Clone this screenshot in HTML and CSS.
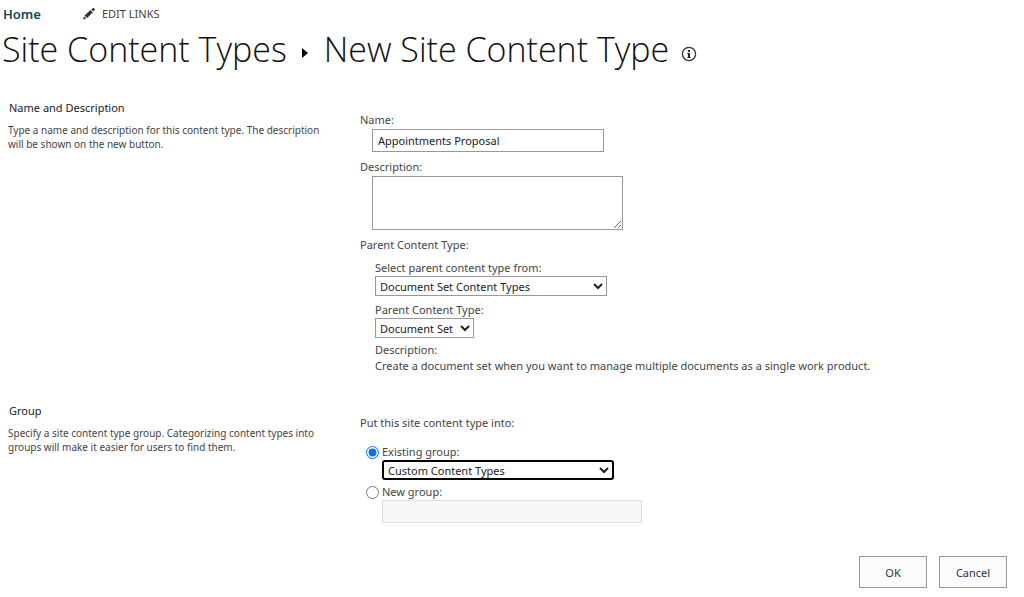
FILE: index.html
```html
<!DOCTYPE html>
<html lang="en">
  <head>
    <meta charset="UTF-8" />
    <meta name="viewport" content="width=device-width, initial-scale=1.0" />
    <title>New Site Content Type</title>
    <link rel="stylesheet" href="styles.css">
  </head>
  <body>
    <header>
      <nav class="top-nav">
        <a class="home" href="#">Home</a>
        <a class="edit-links" href="#">
          <svg class="pencil" viewBox="0 0 14 14" aria-hidden="true">
            <path d="M1 12.500l1-3.200 2.400 2.300zM2.500 8.500l6-5.400 2.300 2.300-5.600 5.700zM9.300 2.500l1.500-1.300c.4-.4.900-.4 1.200 0l.7.700c.4.400.4.900 0 1.200l-1.400 1.500z" />
          </svg>
          EDIT LINKS
        </a>
      </nav>
      <h1 class="title">
        <a href="#">Site Content Types</a>
        <svg class="arrow" viewBox="0 0 6 10" aria-hidden="true"><path d="M0 0l6 5-6 5z" /></svg>
        <span>New Site Content Type</span>
        <svg class="info" viewBox="0 0 16 16" aria-hidden="true">
          <circle cx="8" cy="8" r="6.600" />
          <path d="M7 4h2v2H7zM6.300 7H9v4h.8v1H6.300v-1H7V8h-.7z" />
        </svg>
      </h1>
    </header>
    <form class="content">
      <section class="section">
        <div class="intro">
          <h2>Name and Description</h2>
          <p>Type a name and description for this content type. The description will be shown on the new button.</p>
        </div>
        <div class="fields">
          <label for="name">Name:</label>
          <input class="text name" id="name" type="text" value="Appointments Proposal">
          <label for="description">Description:</label>
          <textarea class="text description" id="description"></textarea>
          <p>Parent Content Type:</p>
          <div class="parent">
            <label for="source">Select parent content type from:</label>
            <select class="wide" id="source">
              <option>Document Set Content Types</option>
            </select>
            <label for="parent">Parent Content Type:</label>
            <select class="short" id="parent">
              <option>Document Set</option>
            </select>
            <p>Description:</p>
            <p>Create a document set when you want to manage multiple documents as a single work product.</p>
          </div>
        </div>
      </section>
      <section class="section">
        <div class="intro">
          <h2>Group</h2>
          <p>Specify a site content type group. Categorizing content types into groups will make it easier for users to find them.</p>
        </div>
        <div class="fields">
          <p>Put this site content type into:</p>
          <div class="group">
            <div class="choice">
              <input type="radio" name="group" id="existing" checked>
              <label for="existing">Existing group:</label>
            </div>
            <select class="wide active" aria-label="Existing group">
              <option>Custom Content Types</option>
            </select>
            <div class="choice">
              <input type="radio" name="group" id="new">
              <label for="new">New group:</label>
            </div>
            <input class="text new-group" type="text" aria-label="New group" disabled>
          </div>
        </div>
      </section>
      <div class="buttons">
        <button type="button">OK</button>
        <button type="button">Cancel</button>
      </div>
    </form>
  </body>
</html>
```

FILE: styles.css
```css
* {
  margin: 0;
  padding: 0;
  box-sizing: border-box;
}

body {
  font-family: "Segoe UI", "Noto Sans", sans-serif;
  font-size: 11px;
  line-height: 16px;
  color: #444;
  background-color: #fff;
}

a {
  color: inherit;
  text-decoration: none;
}

.top-nav {
  display: flex;
  align-items: center;
  gap: 41px;
  padding: 6px 3px 0;
}

.home {
  font-size: 13px;
  font-weight: 600;
  color: #0b4a5a;
}

.edit-links {
  display: flex;
  align-items: center;
  gap: 6px;
}

.pencil {
  width: 14px;
  height: 14px;
  fill: #333;
}

.title {
  display: flex;
  align-items: center;
  padding: 3px 2px 0;
  font-family: "Segoe UI Light", "Open Sans", sans-serif;
  font-size: 34px;
  font-weight: 300;
  line-height: 48px;
  color: #111;
}

.arrow {
  width: 6px;
  height: 10px;
  margin: 7px 16px 0 15px;
}

.info {
  width: 16px;
  height: 16px;
  margin: 9px 0 0 12px;
  fill: #222;
}

.info circle {
  fill: none;
  stroke: #333;
  stroke-width: 1.3;
}

.content {
  padding-top: 27px;
}

.section {
  display: grid;
  grid-template-columns: 352px 1fr;
  padding: 0 8px;
  margin-bottom: 29px;
}

.intro h2 {
  padding-left: 1px;
  font-size: 11px;
  font-weight: 400;
  color: #222;
}

.intro p {
  max-width: 324px;
  margin-top: 7px;
  font-size: 10px;
  line-height: 14px;
}

.fields {
  padding-top: 12px;
}

.fields label,
.fields select,
.fields .text {
  display: block;
}

.text,
select {
  font-family: inherit;
  font-size: 11px;
  color: #222;
  background-color: #fff;
  border: 1px solid #999;
}

.text {
  height: 23px;
  padding: 0 5px;
  margin: 1px 0 7px 12px;
}

.name {
  width: 232px;
}

.description {
  width: 251px;
  height: 54px;
}

select {
  height: 20px;
  margin-bottom: 6px;
}

.wide {
  width: 232px;
}

.short {
  width: 99px;
  margin-bottom: 4px;
}

.parent {
  padding: 7px 0 0 15px;
}

.group {
  padding: 13px 0 0 22px;
}

.choice {
  display: flex;
  align-items: center;
  gap: 3px;
  margin-left: -16px;
}

.choice input {
  width: 13px;
  height: 13px;
}

.active {
  margin-bottom: 4px;
  border: 2px solid #000;
  border-radius: 3px;
}

.new-group {
  width: 260px;
  margin: 0;
  background-color: #f8f8f8;
  border-color: #ddd;
}

.buttons {
  display: flex;
  justify-content: flex-end;
  gap: 12px;
  padding: 4px 17px 8px;
}

.buttons button {
  width: 68px;
  height: 32px;
  font-family: inherit;
  font-size: 11px;
  color: #333;
  background-color: #fbfbfb;
  border: 1px solid #999;
}
```
